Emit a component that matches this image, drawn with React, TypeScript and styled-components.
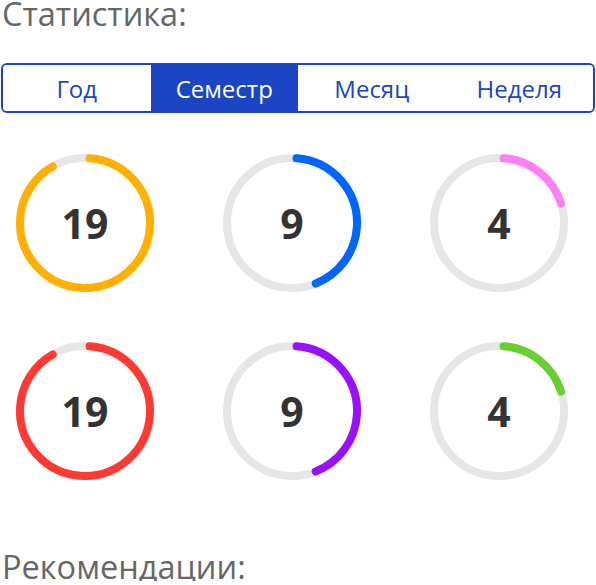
import { FC, useState } from 'react';
import styled, { createGlobalStyle } from 'styled-components';

const GlobalStyle = createGlobalStyle`
  html, body {
    margin: 0;
    padding: 0;
    background: #fff;
    font-family: 'Open Sans', 'Noto Sans', sans-serif;
  }
`;

const Page = styled.div`
  width: 596px;
  overflow: hidden;
`;

const Heading = styled.h2<{ gap?: number }>`
  margin: ${(p) => p.gap ?? 0}px 0 0 2px;
  font-size: 32.5px;
  font-weight: 400;
  line-height: 28px;
  color: #666;
`;

const Tabs = styled.div`
  display: grid;
  grid-template-columns: repeat(4, 1fr);
  margin: 35px 1px 0 1px;
  height: 50px;
  border: 2px solid #1b45c5;
  border-radius: 6px;
  overflow: hidden;
  box-sizing: border-box;
`;

const Tab = styled.button<{ active?: boolean }>`
  border: none;
  padding: 0;
  font-family: inherit;
  font-size: 24px;
  cursor: pointer;
  background: ${(p) => (p.active ? '#1b45c5' : '#fff')};
  color: ${(p) => (p.active ? '#fff' : '#1b45c5')};
`;

const Grid = styled.div`
  display: grid;
  grid-template-columns: repeat(3, 138px);
  column-gap: 69px;
  row-gap: 50px;
  padding: 41px 0 0 16px;
`;

const Ring = styled.div`
  position: relative;
  width: 138px;
  height: 138px;
`;

const Value = styled.span`
  position: absolute;
  inset: 0;
  display: flex;
  align-items: center;
  justify-content: center;
  font-size: 41px;
  font-weight: 700;
  color: #333;
`;

const MAX = 21;

const Progress: FC<{ value: number; color: string }> = ({ value, color }) => {
  const r = 65;
  const len = 2 * Math.PI * r;
  const part = (value / MAX) * len;
  return (
    <Ring>
      <svg width="138" height="138" viewBox="0 0 138 138">
        <circle cx="69" cy="69" r={r} fill="none" stroke="#e6e6e6" strokeWidth="8" />
        <circle
          cx="69"
          cy="69"
          r={r}
          fill="none"
          stroke={color}
          strokeWidth="8"
          strokeLinecap="round"
          strokeDasharray={`${part} ${len}`}
          transform="rotate(-86 69 69)"
        />
      </svg>
      <Value>{value}</Value>
    </Ring>
  );
};

const stats = [
  { value: 19, color: '#ffb000' },
  { value: 9, color: '#0066ff' },
  { value: 4, color: '#ff80f4' },
  { value: 19, color: '#ff3a33' },
  { value: 9, color: '#9810ff' },
  { value: 4, color: '#68d02e' },
];

const periods = ['Год', 'Семестр', 'Месяц', 'Неделя'];

export default function App() {
  const [period, setPeriod] = useState('Семестр');
  return (
    <Page>
      <GlobalStyle />
      <Heading>Статистика:</Heading>
      <Tabs>
        {periods.map((p) => (
          <Tab key={p} active={p === period} onClick={() => setPeriod(p)}>
            {p}
          </Tab>
        ))}
      </Tabs>
      <Grid>
        {stats.map((s, i) => (
          <Progress key={i} value={s.value} color={s.color} />
        ))}
      </Grid>
      <Heading gap={73}>Рекомендации:</Heading>
    </Page>
  );
}
